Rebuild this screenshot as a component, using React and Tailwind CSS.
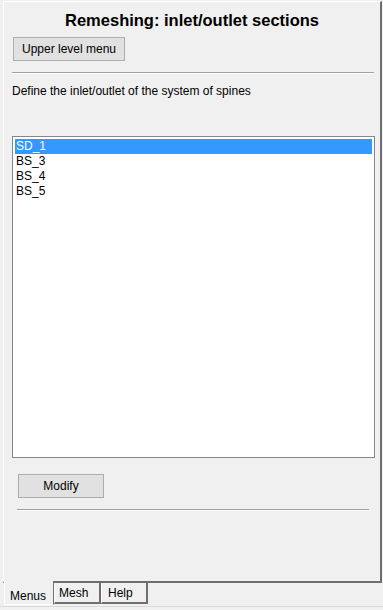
const items = ["SD_1", "BS_3", "BS_4", "BS_5"]

const font = { fontFamily: '"Liberation Sans", Arial, sans-serif' }

const App = () => {
  return (
    <div className="w-[383px] h-[610px] bg-[#f0f0f0] flex flex-col text-black" style={font}>
      <div className="ml-[3px] mt-[1px] w-[379px] h-[582px] flex flex-col border-l border-t border-l-white border-t-white border-r-2 border-b-2 border-r-[#6e6e6e] border-b-[#6e6e6e]">
        <h1 className="text-[16.5px] font-bold text-center mt-[8px] leading-[20px]">Remeshing: inlet/outlet sections</h1>
        <div className="mt-[6px] ml-[9px]">
          <button className="w-[112px] h-[24px] bg-[#e1e1e1] border border-[#adadad] text-[12px] leading-none">Upper level menu</button>
        </div>
        <div className="mt-[11px] ml-[8px] w-[362px] h-[2px] border-t border-t-[#a0a0a0] border-b border-b-white"></div>
        <p className="mt-[10px] ml-[8px] text-[12px] leading-[14px]">Define the inlet/outlet of the system of spines</p>
        <div className="mt-[38px] ml-[8px] w-[363px] h-[322px] bg-white border border-[#828790] p-[2px]">
          {items.map((it, i) => (
            <div
              key={it}
              className={
                i === 0
                  ? "h-[15px] pl-[1px] text-[12px] leading-[15px] bg-[#3399ff] text-white"
                  : "h-[15px] pl-[1px] text-[12px] leading-[15px]"
              }
            >
              {it}
            </div>
          ))}
        </div>
        <div className="mt-[15px] ml-[14px]">
          <button className="w-[86px] h-[24px] bg-[#e1e1e1] border border-[#adadad] text-[12px] leading-none">Modify</button>
        </div>
        <div className="mt-[11px] ml-[13px] w-[352px] h-[2px] border-t border-t-[#a0a0a0] border-b border-b-white"></div>
      </div>
      <div className="flex ml-[4px] -mt-[2px] text-[12px]">
        <div className="w-[50px] h-[24px] bg-[#f0f0f0] border-l border-l-white border-b border-b-white border-r border-r-[#6e6e6e] pl-[5px] pt-[8px] leading-[14px] relative z-10">Menus</div>
        <div className="w-[47px] h-[21px] mt-[2px] border-l border-l-white border-b-2 border-b-[#6e6e6e] border-r-2 border-r-[#6e6e6e] pl-[4px] pt-[3px] leading-[14px]">Mesh</div>
        <div className="w-[47px] h-[21px] mt-[2px] border-l border-l-white border-b-2 border-b-[#6e6e6e] border-r-2 border-r-[#6e6e6e] pl-[6px] pt-[3px] leading-[14px]">Help</div>
      </div>
      <div className="mt-[1px] h-px bg-[#dcdcdc] w-full"></div>
    </div>
  )
}

export default App
